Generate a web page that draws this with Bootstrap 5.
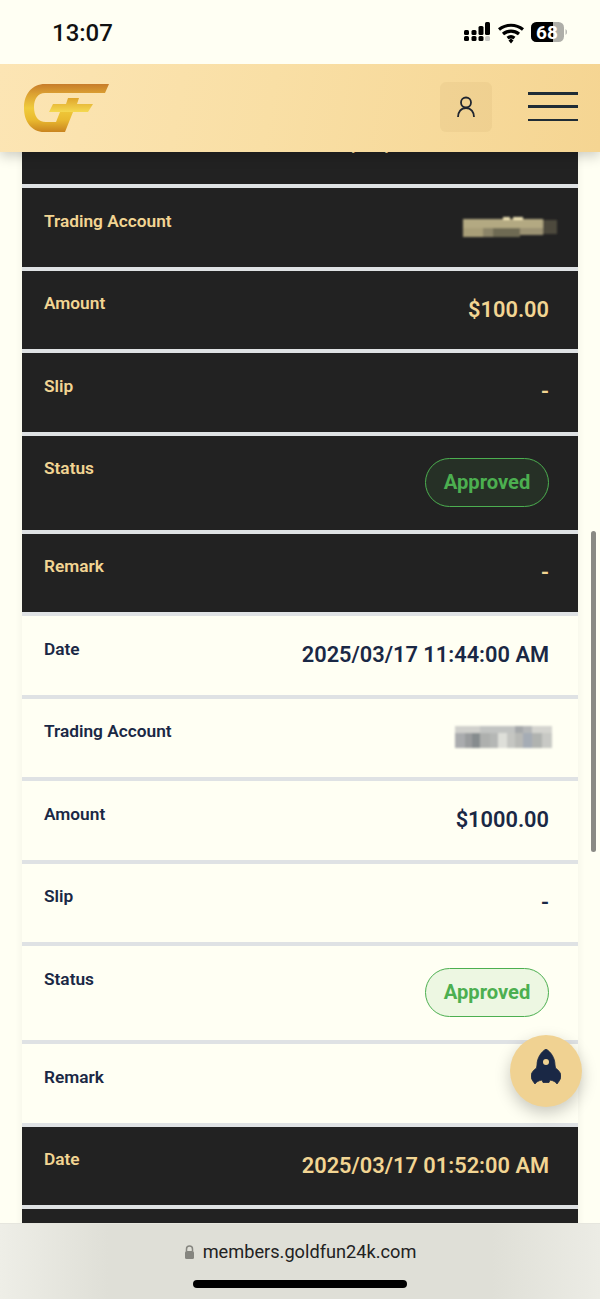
<!DOCTYPE html>
<html lang="en">
<head>
    <meta charset="UTF-8">
    <meta name="viewport" content="width=device-width, initial-scale=1.0">
    <title>Deposit History</title>
    <link href="https://cdn.jsdelivr.net/npm/bootstrap@5.3.0/dist/css/bootstrap.min.css" rel="stylesheet">
    <style>
        body {
            background-color: #fffff3;
            font-family: Roboto, sans-serif;
            overflow: hidden;
            height: 1299px;
        }
        .status-strip {
            height: 64px;
            background-color: #fffff3;
            padding: 2px 31px 0 52px;
            z-index: 1040;
        }
        .status-time {
            font-size: 24px;
            font-weight: 500;
            color: #111;
        }
        .top-header {
            top: 64px;
            height: 88px;
            padding: 0 22px 0 22px;
            background: linear-gradient(100deg, #fce5b4 0%, #f9dfa5 45%, #f5d592 100%);
            box-shadow: 0 4px 12px rgba(0, 0, 0, .2);
            z-index: 1030;
        }
        .user-btn {
            width: 52px;
            height: 50px;
            margin: 0 36px 2px 0;
            border-radius: 6px;
            background-color: rgba(190, 160, 90, .12);
        }
        .burger-bars {
            width: 50px;
            height: 29px;
            margin-bottom: 3px;
        }
        .burger-bars span {
            height: 2.5px;
            background-color: #1f2c36;
        }
        .txn-list {
            margin: 105.5px 22px 0;
            box-shadow: 0 0 8px rgba(0, 0, 0, .06);
        }
        .txn-row {
            padding: 22px 29px 0 22px;
            height: 82.5px;
            border-bottom: 4.5px solid #dfe2e4;
            background-color: #fffff3;
            color: #1a2845;
        }
        .txn-row.txn-tall {
            height: 98px;
        }
        .txn-dark {
            background-color: #222222;
            color: #f2d593;
        }
        .txn-label {
            margin-top: -1.5px;
            font-size: 17.3px;
            line-height: 24px;
            font-weight: 600;
        }
        .txn-value {
            font-size: 21.8px;
            line-height: 33px;
            font-weight: 600;
        }
        .pill-ok {
            width: 124px;
            height: 49px;
            border: 1.8px solid #4caf50;
            border-radius: 25px;
            background-color: rgba(76, 175, 80, .1);
            color: #4caf50;
            font-size: 20.2px;
            font-weight: 700;
        }
        .blur-acct {
            margin: 4px -12px 0 0;
            width: 112px;
            height: 30px;
            overflow: visible;
        }
        .page-scroll {
            top: 531px;
            right: 4px;
            width: 5px;
            height: 321px;
            border-radius: 3px;
            background-color: #8a8a84;
            z-index: 1020;
        }
        .fab-rocket {
            right: 18px;
            top: 1035px;
            width: 72px;
            height: 72px;
            padding-bottom: 8px;
            background-color: #f0d292;
            box-shadow: 0 6px 16px rgba(0, 0, 0, .22);
            z-index: 1025;
        }
        .url-bar {
            top: 1223px;
            height: 76px;
            background: linear-gradient(90deg, #eeeee7 0%, #dfdfd7 18%, #dfdfd7 82%, #ecece5 100%);
            border-top: 1px solid #e6e6de;
            z-index: 1035;
        }
        .url-text {
            margin-top: 16px;
            font-size: 18.2px;
            line-height: 24px;
            color: #222;
        }
        .home-bar {
            left: 193px;
            top: 56px;
            width: 214px;
            height: 8px;
            border-radius: 4px;
            background-color: #000;
        }
    </style>
</head>
<body>
    <!-- phone status bar -->
    <div class="status-strip position-fixed top-0 start-0 end-0 d-flex justify-content-between align-items-center">
        <span class="status-time">13:07</span>
        <svg width="106" height="24" viewBox="0 0 106 24">
            <g fill="#000">
                <rect x="1" y="15" width="5" height="5" rx="1.500"/>
                <rect x="1" y="9" width="5" height="5" rx="1.500"/>
                <rect x="8.500" y="15" width="5" height="5" rx="1.500"/>
                <rect x="8.500" y="9" width="5" height="5" rx="1.500"/>
                <rect x="15.500" y="15" width="5" height="5" rx="1.500"/>
                <rect x="15.500" y="5" width="5" height="9" rx="1.500"/>
                <rect x="22" y="1" width="5" height="13" rx="1.500"/>
            </g>
            <rect x="22" y="15" width="5" height="5" rx="1.500" fill="#c9c9c4"/>
            <path d="M36 8.500a19 19 0 0 1 24 0M40 13a12.500 12.500 0 0 1 16 0M44.500 17a6 6 0 0 1 7 0" fill="none" stroke="#000" stroke-width="3.200"/>
            <path d="M45.500 19.500 48 17.500l2.500 2-2.500 3z" fill="#000"/>
            <rect x="68" y="1" width="33" height="20" rx="5.500" fill="#aeaea8"/>
            <path d="M73.500 1H90V21H73.500A5.500 5.500 0 0 1 68 15.500V6.500A5.500 5.500 0 0 1 73.500 1z" fill="#000"/>
            <path d="M102.500 8v6a3 3 0 0 0 1.500-3 3 3 0 0 0-1.500-3z" fill="#b5b5af"/>
            <text x="84" y="17.800" fill="#fff" font-family="Roboto, sans-serif" font-size="19" font-weight="700" text-anchor="middle">68</text>
        </svg>
    </div>

    <!-- site header -->
    <header class="top-header position-fixed start-0 end-0 d-flex justify-content-between align-items-center">
        <svg width="90" height="52" viewBox="22 81 90 52">
            <defs>
                <linearGradient id="goldG" x1="0" y1="0" x2="0" y2="1">
                    <stop offset="0" stop-color="#c77c2b"/>
                    <stop offset=".2" stop-color="#dba032"/>
                    <stop offset=".5" stop-color="#f0cb3c"/>
                    <stop offset=".75" stop-color="#e9b92f"/>
                    <stop offset="1" stop-color="#c9841f"/>
                </linearGradient>
                <linearGradient id="goldP" x1="0" y1="0" x2="0" y2="1">
                    <stop offset="0" stop-color="#dfa52c"/>
                    <stop offset="1" stop-color="#f5d950"/>
                </linearGradient>
            </defs>
            <path d="M45 83H109L105 92H45C38 92 34 98 34 106C34 115 38 121 46 121H56L60 111H73L65 131H44C32 131 24 121 24 107C24 93 32 83 45 83Z" fill="url(#goldG)"/>
            <path d="M53 103H66L68 97H79L77 103H93L88 111H49Z" fill="url(#goldP)"/>
        </svg>
        <div class="d-flex align-items-center">
            <div class="user-btn d-flex align-items-center justify-content-center">
                <svg width="20" height="22" viewBox="0 0 20 22" fill="none" stroke="#1f2530" stroke-width="1.800">
                    <circle cx="10" cy="6.500" r="5"/>
                    <path d="M2 21c0-5 3-9 8-9s8 4 8 9"/>
                </svg>
            </div>
            <div class="burger-bars d-flex flex-column justify-content-between">
                <span></span>
                <span></span>
                <span></span>
            </div>
        </div>
    </header>

    <!-- transaction rows -->
    <main class="txn-list">
        <div class="txn-row txn-dark d-flex justify-content-between align-items-start">
            <span class="txn-label">Date</span>
            <span class="txn-value">2025/03/17 01:58:00 PM</span>
        </div>
        <div class="txn-row txn-dark d-flex justify-content-between align-items-start">
            <span class="txn-label">Trading Account</span>
            <svg class="blur-acct" viewBox="0 0 112 30">
                <defs>
                    <filter id="soft"><feGaussianBlur stdDeviation="1"/></filter>
                </defs>
                <g filter="url(#soft)">
                    <rect x="14" y="5" width="80" height="10" fill="#b3a982"/>
                    <rect x="14" y="14" width="20" height="9" fill="#a89e78"/>
                    <rect x="34" y="14" width="10" height="9" fill="#8b8467"/>
                    <rect x="44" y="14" width="27" height="9" fill="#6e6a52"/>
                    <rect x="71" y="14" width="23" height="7" fill="#9b9273"/>
                    <rect x="94" y="6" width="14" height="14" fill="#4d4a3e"/>
                    <rect x="54" y="3" width="7" height="3" fill="#efe3b5"/>
                    <rect x="64" y="3" width="10" height="3" fill="#efe3b5"/>
                </g>
            </svg>
        </div>
        <div class="txn-row txn-dark d-flex justify-content-between align-items-start">
            <span class="txn-label">Amount</span>
            <span class="txn-value">$100.00</span>
        </div>
        <div class="txn-row txn-dark d-flex justify-content-between align-items-start">
            <span class="txn-label">Slip</span>
            <span class="txn-value">-</span>
        </div>
        <div class="txn-row txn-tall txn-dark d-flex justify-content-between align-items-start">
            <span class="txn-label">Status</span>
            <span class="pill-ok d-flex align-items-center justify-content-center">Approved</span>
        </div>
        <div class="txn-row txn-dark d-flex justify-content-between align-items-start">
            <span class="txn-label">Remark</span>
            <span class="txn-value">-</span>
        </div>

        <div class="txn-row d-flex justify-content-between align-items-start">
            <span class="txn-label">Date</span>
            <span class="txn-value">2025/03/17 11:44:00 AM</span>
        </div>
        <div class="txn-row d-flex justify-content-between align-items-start">
            <span class="txn-label">Trading Account</span>
            <svg class="blur-acct" viewBox="0 0 112 30">
                <g filter="url(#soft)">
                    <rect x="6" y="1" width="25" height="8" fill="#d0d0cc"/>
                    <rect x="31" y="1" width="35" height="8" fill="#c2c4c2"/>
                    <rect x="66" y="1" width="8" height="8" fill="#a5a8aa"/>
                    <rect x="74" y="1" width="9" height="8" fill="#b5b7b8"/>
                    <rect x="83" y="1" width="20" height="8" fill="#d4d4cf"/>
                    <rect x="6" y="8" width="10" height="15" fill="#aaacae"/>
                    <rect x="16" y="8" width="7" height="15" fill="#9a9c9e"/>
                    <rect x="23" y="8" width="8" height="15" fill="#868c8e"/>
                    <rect x="31" y="8" width="10" height="15" fill="#aeb0ae"/>
                    <rect x="41" y="8" width="8" height="15" fill="#b5b7b5"/>
                    <rect x="49" y="8" width="9" height="15" fill="#dedfd9"/>
                    <rect x="58" y="8" width="8" height="15" fill="#c5c6c2"/>
                    <rect x="66" y="8" width="8" height="15" fill="#b8b9b6"/>
                    <rect x="74" y="8" width="9" height="15" fill="#a5acb5"/>
                    <rect x="83" y="8" width="10" height="15" fill="#b0b3b0"/>
                    <rect x="93" y="8" width="10" height="15" fill="#c8c9c5"/>
                </g>
            </svg>
        </div>
        <div class="txn-row d-flex justify-content-between align-items-start">
            <span class="txn-label">Amount</span>
            <span class="txn-value">$1000.00</span>
        </div>
        <div class="txn-row d-flex justify-content-between align-items-start">
            <span class="txn-label">Slip</span>
            <span class="txn-value">-</span>
        </div>
        <div class="txn-row txn-tall d-flex justify-content-between align-items-start">
            <span class="txn-label">Status</span>
            <span class="pill-ok d-flex align-items-center justify-content-center">Approved</span>
        </div>
        <div class="txn-row d-flex justify-content-between align-items-start">
            <span class="txn-label">Remark</span>
        </div>

        <div class="txn-row txn-dark d-flex justify-content-between align-items-start">
            <span class="txn-label">Date</span>
            <span class="txn-value">2025/03/17 01:52:00 AM</span>
        </div>
        <div class="txn-row txn-dark"></div>
    </main>

    <div class="page-scroll position-fixed"></div>

    <div class="fab-rocket position-fixed rounded-circle d-flex align-items-center justify-content-center">
        <svg width="30" height="36" viewBox="10 8 30 36">
            <path fill="#1a2845" stroke="#1a2845" stroke-width=".8" stroke-linejoin="round" d="M25 8C30 11 34 17 34 24L34.500 27C37.500 29 40 32 40 35C40 38 37.500 41 36 43C35 41 32 39.500 29 39L28 41.500H22L21 39C18 39.500 15 41 14 43C12.500 41 10 38 10 35C10 32 12.500 29 15.500 27L16 24C16 17 20 11 25 8Z"/>
            <circle cx="25" cy="21" r="3" fill="#f0d292"/>
        </svg>
    </div>

    <!-- browser address bar -->
    <footer class="url-bar position-fixed start-0 end-0">
        <div class="url-text d-flex align-items-center justify-content-center gap-2">
            <svg width="11" height="14" viewBox="0 0 11 14">
                <path d="M2.500 6V4a3 3 0 0 1 6 0v2" fill="none" stroke="#85857f" stroke-width="1.500"/>
                <rect x="1" y="6" width="9" height="8" rx="1.500" fill="#85857f"/>
            </svg>
            <span>members.goldfun24k.com</span>
        </div>
        <div class="home-bar position-absolute"></div>
    </footer>

    <script src="https://cdn.jsdelivr.net/npm/bootstrap@5.3.0/dist/js/bootstrap.bundle.min.js"></script>
</body>
</html>
